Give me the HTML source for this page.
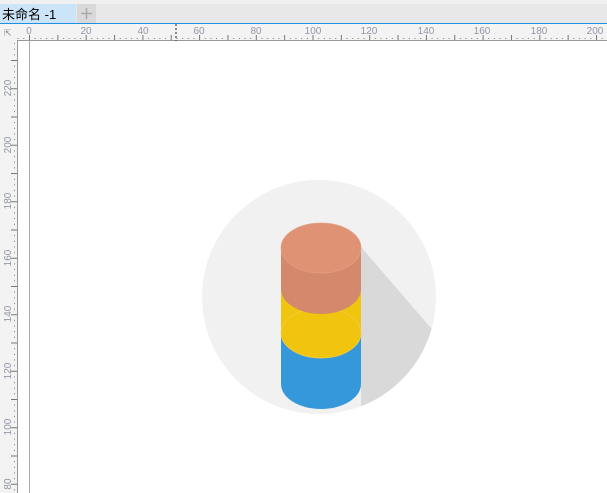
<!DOCTYPE html>
<html><head><meta charset="utf-8"><style>
html,body{margin:0;padding:0;width:607px;height:493px;overflow:hidden;background:#fff}
svg{display:block}
text{font-family:"Liberation Sans",sans-serif}
</style></head><body>
<svg width="607" height="493" viewBox="0 0 607 493" xmlns="http://www.w3.org/2000/svg">
<defs>
<pattern id="tx" x="29" y="0" width="28.35" height="493" patternUnits="userSpaceOnUse">
<rect x="0" y="35" width="1" height="6" fill="#777"/>
<rect x="5.67" y="38" width="1" height="1" fill="#777"/>
<rect x="11.34" y="38" width="1" height="1" fill="#777"/>
<rect x="17" y="38" width="1" height="1" fill="#777"/>
<rect x="22.68" y="38" width="1" height="1" fill="#777"/>
</pattern>
<pattern id="ty" x="0" y="0" width="17" height="28.25" patternUnits="userSpaceOnUse" patternTransform="translate(0,3.5)">
<rect x="11" y="0" width="6" height="1" fill="#777"/>
<rect x="14" y="5.65" width="1" height="1" fill="#777"/>
<rect x="14" y="11.3" width="1" height="1" fill="#777"/>
<rect x="14" y="16.95" width="1" height="1" fill="#777"/>
<rect x="14" y="22.6" width="1" height="1" fill="#777"/>
</pattern>
<clipPath id="c"><circle cx="319" cy="297" r="117"/></clipPath>
</defs>
<rect x="0" y="0" width="607" height="4" fill="#f0f0f0"/>
<rect x="0" y="4" width="607" height="19" fill="#e8e8e8"/>
<rect x="0" y="4" width="76" height="19" fill="#cce4f7"/>
<rect x="77" y="4" width="19" height="19" fill="#d9d9d9"/>
<text x="2" y="19" font-size="13" fill="#000" style='font-family:"Liberation Sans","Noto Sans CJK SC",sans-serif'>未命名 -1</text>
<path d="M86.5 8v11M81 13.5h11" stroke="#aaa" stroke-width="1.5"/>
<rect x="0" y="23" width="607" height="1" fill="#1e90e0"/>
<rect x="0" y="24" width="607" height="17" fill="#f3f3f3"/>
<rect x="0" y="24" width="17" height="469" fill="#f3f3f3"/>
<rect x="17" y="24" width="590" height="17" fill="url(#tx)"/>
<rect x="0" y="41" width="17" height="452" fill="url(#ty)"/>
<rect x="17" y="40" width="590" height="1" fill="#999"/>
<rect x="17" y="40" width="1" height="453" fill="#999"/>
<rect x="29" y="41" width="1" height="452" fill="#aaa"/>
<path d="M176 24v17" stroke="#222" stroke-dasharray="2,2"/>
<text x="4" y="36" font-size="9" fill="#888">⇱</text>
<g font-size="10" fill="#9097a8" text-anchor="middle">
<text x="29" y="34">0</text><text x="86" y="34">20</text><text x="143" y="34">40</text><text x="199" y="34">60</text><text x="256" y="34">80</text><text x="313" y="34">100</text><text x="369" y="34">120</text><text x="426" y="34">140</text><text x="482" y="34">160</text><text x="539" y="34">180</text><text x="595" y="34">200</text>
</g>
<g font-size="10" fill="#9097a8" text-anchor="middle">
<text transform="translate(11,88) rotate(-90)">220</text>
<text transform="translate(11,145) rotate(-90)">200</text>
<text transform="translate(11,201) rotate(-90)">180</text>
<text transform="translate(11,258) rotate(-90)">160</text>
<text transform="translate(11,314) rotate(-90)">140</text>
<text transform="translate(11,371) rotate(-90)">120</text>
<text transform="translate(11,427) rotate(-90)">100</text>
<text transform="translate(11,484) rotate(-90)">80</text>
</g>
<circle cx="319" cy="297" r="117" fill="#f1f1f1"/>
<g clip-path="url(#c)">
<polygon points="361,247 620,547 361,547" fill="#d9d9d9"/>
<path d="M281 333H361V384A40 25 0 0 1 281 384Z" fill="#3498db"/>
</g>
<path d="M281 289H361V333A40 25 0 0 1 281 333Z" fill="#f1c40f"/>
<ellipse cx="321" cy="333" rx="40" ry="25" fill="none" stroke="#f4cf46" stroke-width="0.7"/>
<path d="M281 248H361V289A40 25 0 0 1 281 289Z" fill="#d4896c"/>
<ellipse cx="321" cy="248" rx="40" ry="25" fill="#df9374" stroke="#e3a086" stroke-width="0.7"/>
</svg>
</body></html>
